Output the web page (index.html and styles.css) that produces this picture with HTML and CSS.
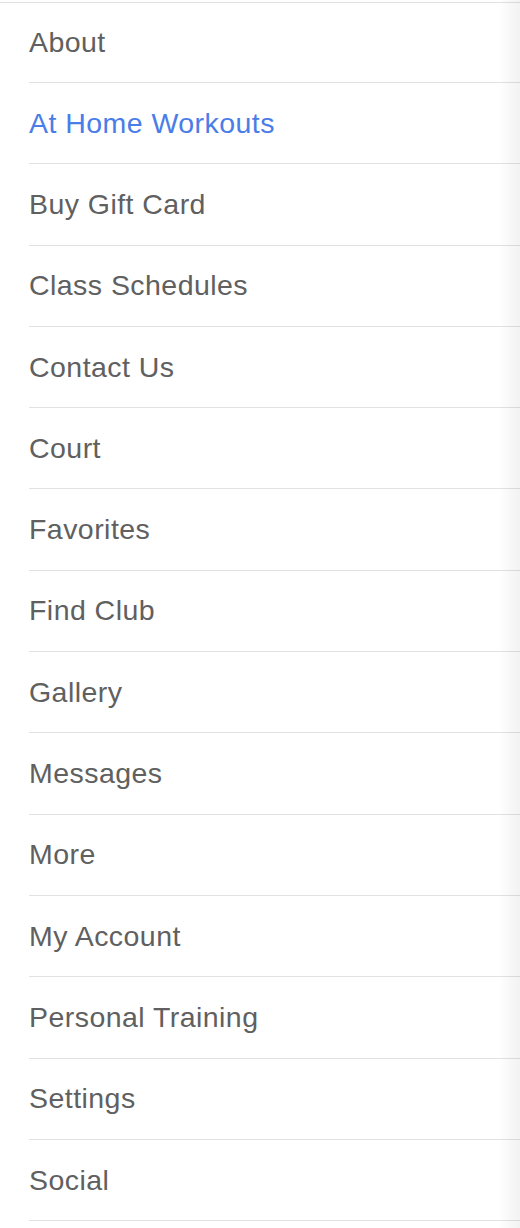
FILE: index.html
```html
<!DOCTYPE html>
<html lang="en">
<head>
    <meta charset="UTF-8">
    <meta name="viewport" content="width=device-width, initial-scale=1.0">
    <title>Menu</title>
    <link rel="stylesheet" href="styles.css">
</head>
<body>
    <nav class="menu">
        <ul class="menuList">
            <li class="menuItem"><a href="#">About</a></li>
            <li class="menuItem active"><a href="#">At Home Workouts</a></li>
            <li class="menuItem"><a href="#">Buy Gift Card</a></li>
            <li class="menuItem"><a href="#">Class Schedules</a></li>
            <li class="menuItem"><a href="#">Contact Us</a></li>
            <li class="menuItem"><a href="#">Court</a></li>
            <li class="menuItem"><a href="#">Favorites</a></li>
            <li class="menuItem"><a href="#">Find Club</a></li>
            <li class="menuItem"><a href="#">Gallery</a></li>
            <li class="menuItem"><a href="#">Messages</a></li>
            <li class="menuItem"><a href="#">More</a></li>
            <li class="menuItem"><a href="#">My Account</a></li>
            <li class="menuItem"><a href="#">Personal Training</a></li>
            <li class="menuItem"><a href="#">Settings</a></li>
            <li class="menuItem"><a href="#">Social</a></li>
        </ul>
    </nav>
</body>
</html>
```

FILE: styles.css
```css
body {
    margin: 0;
    background-color: #fff;
    font-family: "Liberation Sans", Arial, sans-serif;
}
.menu {
    position: relative;
    min-height: 1228px;
    padding-top: 2px;
    box-sizing: border-box;
}
/* soft shadow along the right edge of the drawer */
.menu::after {
    content: "";
    position: absolute;
    top: 0;
    right: 0;
    bottom: 0;
    width: 22px;
    background: linear-gradient(to right, rgba(0, 0, 0, 0), rgba(0, 0, 0, 0.05));
    pointer-events: none;
}
.menuList {
    list-style: none;
    margin: 0;
    padding: 0;
    border-top: 1px solid #e2e2e2;
}
.menuItem {
    margin-left: 29px;
    height: 81.3px;
    box-sizing: border-box;
    border-bottom: 1px solid #e2e2e2;
    display: flex;
    align-items: center;
}
.menuItem:first-child {
    height: 80px;
}
.menuItem a {
    color: #606060;
    text-decoration: none;
    font-size: 28.5px;
    letter-spacing: 0.45px;
}
.menuItem.active a {
    color: #4a7de8;
}
```
